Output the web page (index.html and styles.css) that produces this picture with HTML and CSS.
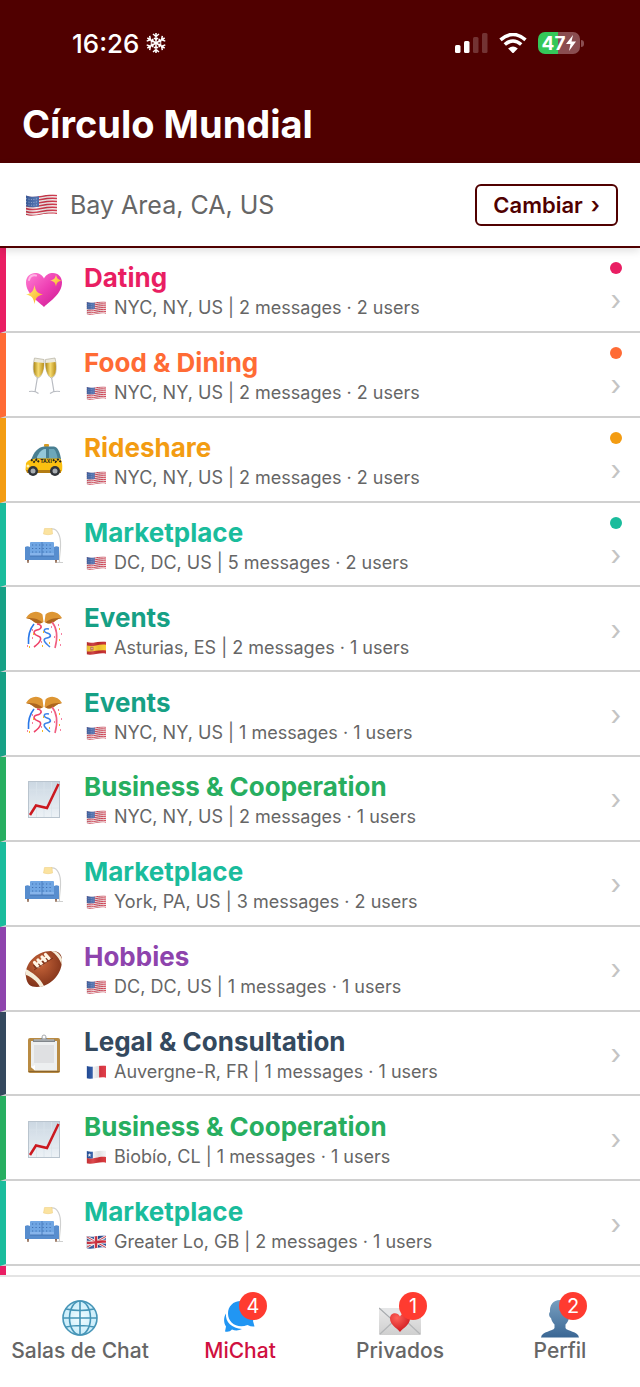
FILE: index.html
```html
<!DOCTYPE html>
<html lang="es">
<head>
  <meta charset="UTF-8">
  <meta name="viewport" content="width=device-width, initial-scale=1">
  <title>Círculo Mundial</title>
  <link rel="stylesheet" href="styles.css">
</head>
<body>
  <!-- icon sprite -->
  <svg class="sprite" aria-hidden="true">
    <defs>
      <linearGradient id="gHeart" x1="0" y1="0" x2="1" y2="1"><stop offset="0" stop-color="#ff7fd2"/><stop offset=".5" stop-color="#ee3fb4"/><stop offset="1" stop-color="#c9188f"/></linearGradient>
      <linearGradient id="gStar" x1="0" y1="0" x2="1" y2="1"><stop offset="0" stop-color="#fff27a"/><stop offset="1" stop-color="#f9a81e"/></linearGradient>
      <linearGradient id="gWine" x1="0" y1="0" x2="1" y2="0"><stop offset="0" stop-color="#a98414"/><stop offset=".45" stop-color="#f6dc72"/><stop offset="1" stop-color="#b88d17"/></linearGradient>
      <linearGradient id="gPaper" x1="0" y1="0" x2="0" y2="1"><stop offset="0" stop-color="#cbd7e2"/><stop offset="1" stop-color="#edf2f6"/></linearGradient>
      <linearGradient id="gPerson" x1="0" y1="0" x2="0" y2="1"><stop offset="0" stop-color="#789fc0"/><stop offset="1" stop-color="#3b6794"/></linearGradient>
      <radialGradient id="gBall" cx=".4" cy=".35" r=".7"><stop offset="0" stop-color="#c9663a"/><stop offset="1" stop-color="#7c2f17"/></radialGradient>
      <radialGradient id="gGlobe"><stop offset="0" stop-color="#f2fcff"/><stop offset="1" stop-color="#c8ecfa"/></radialGradient>
      <linearGradient id="gMail" x1="0" y1="0" x2="0" y2="1"><stop offset="0" stop-color="#e9e9e9"/><stop offset="1" stop-color="#cfcfcf"/></linearGradient>
      <radialGradient id="gRed" cx=".35" cy=".25" r=".8"><stop offset="0" stop-color="#ff6259"/><stop offset="1" stop-color="#cc151c"/></radialGradient>
      <linearGradient id="gShade" x1="0" y1="0" x2="1" y2="0"><stop offset="0" stop-color="#000" stop-opacity=".12"/><stop offset=".35" stop-color="#fff" stop-opacity=".12"/><stop offset=".65" stop-color="#000" stop-opacity=".08"/><stop offset="1" stop-color="#fff" stop-opacity=".05"/></linearGradient>
      <clipPath id="wave"><path d="M1 1.500C6 3.500 11 2.800 16 1.800S26 0 32 .8V20C26 19 21 19.800 16 20.500S6 22.500 1 21Z"/></clipPath>
    </defs>

    <symbol id="heart" viewBox="0 0 40 40">
      <path d="M20 37C14 31 2 24 2 12.500C2 6.500 6.500 3 11 3C15 3 18.500 5 20 8.500C21.500 5 25 3 29 3C34 3 38 7 38 12.500C38 24 26 31 20 37Z" fill="url(#gHeart)"/>
      <path d="M5 10C6 6 9 5 12 5.500" fill="none" stroke="#ffb5e5" stroke-width="2" stroke-linecap="round"/>
      <path d="M10.500 15C11.500 21 13 23 19 24.500C13 26 11.500 28 10.500 34C9.500 28 8 26 2 24.500C8 23 9.500 21 10.500 15Z" fill="url(#gStar)"/>
      <path d="M32 4.500C32.700 8.500 34 9.800 38 10.500C34 11.300 32.700 12.500 32 16.500C31.300 12.500 30 11.300 26 10.500C30 9.800 31.300 8.500 32 4.500Z" fill="url(#gStar)"/>
    </symbol>

    <symbol id="glasses" viewBox="0 0 40 40">
      <g stroke="#b9bcc2" stroke-width="1.200" fill="none">
        <path d="M13.500 22L11 37M5 36.500Q11 35.500 14.500 38.500"/>
        <path d="M27.500 22L30 37M36 36.500Q30 35.500 26 38.500"/>
      </g>
      <path d="M10.500 3L20 4.500C20.500 14 18 22 14 23C8.500 21.500 8.500 11 10.500 3Z" fill="#eceade" stroke="#b5b0a0" stroke-width=".7"/>
      <path d="M31 3L21.500 4.500C21 14 23.500 22 27.500 23C33 21.500 33 11 31 3Z" fill="#eceade" stroke="#b5b0a0" stroke-width=".7"/>
      <path d="M10 7L20 8C20 16 17.500 21.500 14 22.300C9.500 21 9 14 10 7Z" fill="url(#gWine)"/>
      <path d="M31.500 7L21.500 8C21.500 16 24 21.500 27.500 22.300C32 21 32.500 14 31.500 7Z" fill="url(#gWine)"/>
    </symbol>

    <symbol id="taxi" viewBox="0 0 40 40">
      <rect x="20" y="4" width="5" height="3" rx="1" fill="#d99c22"/>
      <path d="M7 20C10 12 14 7 20 6.500H30C34 7 36 13 37 19L36 22H8Z" fill="#487f92"/>
      <path d="M13 17C15 13 17 9.500 21 9H22V18H13Z" fill="#94c8d8"/>
      <path d="M25 9H30C32 11 33 15 33.500 18H25Z" fill="#6ca7b9"/>
      <path d="M2 23C4 20 8 19 12 18.500H36C38.500 21 38.500 27 38 31L35 33H4L1.500 30Z" fill="#fbc011"/>
      <path d="M7 19.500L10 22L12.500 19.500L15 22M29 19.500L31.500 22L34 19.500L37.500 22.500" fill="none" stroke="#26221b" stroke-width="1.800" stroke-dasharray="2 1"/>
      <circle cx="4" cy="26" r="1.500" fill="#fff3b4"/>
      <path d="M2 30H37V33H3Z" fill="#b47c13"/>
      <circle cx="9" cy="31" r="5" fill="#30343a"/><circle cx="9" cy="31" r="2.500" fill="#a8adb2"/>
      <circle cx="31" cy="31" r="5" fill="#30343a"/><circle cx="31" cy="31" r="2.500" fill="#a8adb2"/>
    </symbol>

    <symbol id="sofa" viewBox="0 0 40 40">
      <path d="M27 4C34 3 37 12 36.500 21C36.300 28 35 33 35.500 37M33 37.500H39" fill="none" stroke="#cfd0cf" stroke-width="1.200"/>
      <path d="M20.500 3.500H28L28.500 9Q24 10.500 19.500 9Z" fill="#fbe3a0" stroke="#eccb78" stroke-width=".5"/>
      <path d="M3 34H5L4.500 38H3.500ZM31 34H33L32.500 38H31.500Z" fill="#7b4c30"/>
      <path d="M6 18Q6 17 7 17H29Q30 17 30 18V28H6Z" fill="#70a6e3"/>
      <path d="M18 17V28" stroke="#4a7fc0"/>
      <path d="M8 20H29M8 23.500H29M8 27H29" stroke="#3e70b2" stroke-width="1.200" stroke-dasharray="1.200 2.300"/>
      <path d="M6 28H30V31H6Z" fill="#86b4eb"/><path d="M18 28V31" stroke="#4a7fc0"/>
      <path d="M1 22Q3.500 20.500 6 22V31H30V22Q32.500 20.500 35 22V35H1Z" fill="#578dce"/>
      <path d="M6 31H30" stroke="#3d70ae" stroke-width=".8"/>
    </symbol>

    <symbol id="party" viewBox="0 0 40 40">
      <path d="M2 8C6 1 14 0 18.500 4.500L19.500 12C15 15 11 13 9 11Q6 8.500 2 8Z" fill="#dd9634"/>
      <path d="M38 8C34 1 26 0 21.500 4.500L20.500 12C25 15 29 13 31 11Q34 8.500 38 8Z" fill="#dd9634"/>
      <path d="M2 8C7 8 14 8 18.500 12.500C14 15 10 12 9 11Q6 8.500 2 8ZM38 8C33 8 26 8 21.500 12.500C26 15 30 12 31 11Q34 8.500 38 8Z" fill="#ad661f"/>
      <g fill="none" stroke-width="1.600">
        <path d="M10 14C5 20 4 26 4.500 34" stroke="#2877e8"/>
        <path d="M28 12C33 18 34 27 31 38" stroke="#f05f80"/>
        <path d="M13 14C19 15 18 19 13 20S10 25 14 26S18 31 10 37" stroke="#ee4269"/>
        <path d="M25 19C19 18 19 22 23 23S28 27 23 28S20 32 26 37" stroke="#3c83e8"/>
      </g>
      <path d="M8 20h1M17 17h1M27 17h1M34 15h1M37 24h1M8 28h1M30 27h1M3 36h1M17 32h1M36 35h1" stroke="#f35883" stroke-width="1.500"/>
      <path d="M9 24h1M19 22h1M25 33h1M35 19h1M18 36h1M5 37h1M35 30h1" stroke="#f8ba25" stroke-width="1.800"/>
    </symbol>

    <symbol id="chart" viewBox="0 0 40 40">
      <rect x="4.500" y="2.500" width="31" height="36" fill="url(#gPaper)" stroke="#b9c4ce"/>
      <path d="M12.500 3V38M20 3V38M27.500 3V38M5 11H35M5 20H35M5 29H35" stroke="#d9e3eb" stroke-width=".8"/>
      <path d="M6 36L12 26.500L23 29L34.500 5" fill="none" stroke="#cb1920" stroke-width="2.500"/>
    </symbol>

    <symbol id="football" viewBox="0 0 40 40">
      <path d="M2 28C0 15 12 2 27 2C35 2 38.500 5 38 13C37 27 25 38 13 38C6 38 3 35 2 28Z" fill="url(#gBall)"/>
      <path d="M27 2C32 5 36 10 37.700 16L38 10C36.500 6 34 3 30.500 2.200ZM1.700 20C8 23 17 30 20 37L16 38C13 32 6 27 2 26Z" fill="#f5ecd8"/>
      <path d="M10 18L25 8" stroke="#7f351c" stroke-width="4"/>
      <path d="M10.500 13.500L14 17.500M14 11L17.500 15M18 8L21.500 12M21.500 5.500L25 9.500" stroke="#fff5e5" stroke-width="3.200" stroke-linecap="round"/>
      <path d="M11 16L24 6.500" stroke="#fff5e5" stroke-width="2"/>
      <path d="M10 21L29 9" stroke="#6d2813" stroke-width=".8"/>
    </symbol>

    <symbol id="clipboard" viewBox="0 0 40 40">
      <rect x="4" y="4" width="32" height="35" rx="2" fill="#b98b43"/>
      <path d="M4.500 37.500H35.500" stroke="#8a642c"/>
      <path d="M7 7H33V36.500H11L7 33Z" fill="#edeff0"/>
      <path d="M10 11H30V29H10Z" fill="#dfe0e2"/>
      <path d="M7 33L11 31V36.500Z" fill="#fff"/>
      <path d="M9 8V5.500H16L18 3.500H22L24 5.500H31V8Z" fill="#81868b"/>
      <circle cx="20" cy="3" r="2" fill="#fff" stroke="#a8abae"/>
      <path d="M10 6H30" stroke="#c5c9cc"/>
    </symbol>

    <symbol id="flag-us" viewBox="0 0 32 22">
      <g clip-path="url(#wave)">
        <path d="M0 0H32V22H0Z" fill="#f5eeee"/>
        <g fill="none" stroke="#cf3347" stroke-width="1.500">
          <path d="M0 2.300C6 4.300 11 3.600 16 2.600S26 .8 32 1.600"/>
          <path d="M0 5.300C6 7.300 11 6.600 16 5.600S26 3.800 32 4.600"/>
          <path d="M0 8.300C6 10.300 11 9.600 16 8.600S26 6.800 32 7.600"/>
          <path d="M0 11.300C6 13.300 11 12.600 16 11.600S26 9.800 32 10.600"/>
          <path d="M0 14.300C6 16.300 11 15.600 16 14.600S26 12.800 32 13.600"/>
          <path d="M0 17.300C6 19.300 11 18.600 16 17.600S26 15.800 32 16.600"/>
          <path d="M0 20.300C6 22.300 11 21.600 16 20.600S26 18.800 32 19.600"/>
        </g>
        <path d="M0 0H14V12.500C10 13.500 5 13.500 0 12Z" fill="#3d62a7"/>
        <path d="M1 4.500Q7 6.500 13 4.500M1 7.500Q7 9.500 13 7.500M1 10.500Q7 12 13 10.500" fill="none" stroke="#b9c9e6" stroke-width=".8" stroke-dasharray="1 1.500"/>
        <path d="M0 0H32V22H0Z" fill="url(#gShade)"/>
      </g>
    </symbol>

    <symbol id="flag-es" viewBox="0 0 32 22">
      <g clip-path="url(#wave)">
        <path d="M0 0H32V22H0Z" fill="#c72c2e"/>
        <path d="M0 6.500C6 8.500 11 7.800 16 6.800S26 5 32 5.800V15C26 14 21 14.800 16 15.500S6 17.500 0 16Z" fill="#fbcc30"/>
        <path d="M7 9H12V15H7Z" fill="#b3603a"/><path d="M8.500 10.500H10.500V13H8.500Z" fill="#e9c3ae"/>
        <path d="M0 0H32V22H0Z" fill="url(#gShade)"/>
      </g>
    </symbol>

    <symbol id="flag-fr" viewBox="0 0 32 22">
      <g clip-path="url(#wave)">
        <path d="M0 0H11V22H0Z" fill="#1f4da0"/><path d="M11 0H21V22H11Z" fill="#f3f3f4"/><path d="M21 0H32V22H21Z" fill="#df3440"/>
        <path d="M0 0H32V22H0Z" fill="url(#gShade)"/>
      </g>
    </symbol>

    <symbol id="flag-cl" viewBox="0 0 32 22">
      <g clip-path="url(#wave)">
        <path d="M0 0H32V22H0Z" fill="#f3f3f4"/>
        <path d="M0 12C6 14 11 13.300 16 12.300S26 10 32 11V22H0Z" fill="#d83237"/>
        <path d="M0 0H11V13Q5 14 0 12Z" fill="#2352a2"/>
        <path d="M5.500 4.500L6.300 7H8.700L6.800 8.500L7.500 11L5.500 9.500L3.500 11L4.200 8.500L2.300 7H4.700Z" fill="#fff"/>
        <path d="M0 0H32V22H0Z" fill="url(#gShade)"/>
      </g>
    </symbol>

    <symbol id="flag-gb" viewBox="0 0 32 22">
      <g clip-path="url(#wave)">
        <path d="M0 0H32V22H0Z" fill="#294c95"/>
        <path d="M0 2L32 20M0 20L32 2" stroke="#f2f2f4" stroke-width="4.500"/>
        <path d="M0 2L32 20M0 20L32 2" stroke="#d23445" stroke-width="1.600"/>
        <path d="M16 0V22M0 12Q8 13 16 11.300T32 10.500" fill="none" stroke="#f2f2f4" stroke-width="6.500"/>
        <path d="M16 0V22M0 12Q8 13 16 11.300T32 10.500" fill="none" stroke="#d2293a" stroke-width="3.800"/>
        <path d="M0 0H32V22H0Z" fill="url(#gShade)"/>
      </g>
    </symbol>

    <symbol id="globe" viewBox="0 0 40 40">
      <circle cx="20" cy="20" r="17" fill="url(#gGlobe)"/>
      <g fill="none" stroke="#4695b7" stroke-width="1.600">
        <circle cx="20" cy="20" r="17"/>
        <ellipse cx="20" cy="20" rx="10.500" ry="17"/>
        <path d="M20 3V37M3 20H37M6 11Q20 14 34 11M6 29Q20 26 34 29"/>
      </g>
    </symbol>

    <symbol id="bubbles" viewBox="0 0 40 40">
      <path d="M6 15.500C3.500 19 3.500 25 6 28.500L5 33.500Q9.500 34.500 12 31.500Q17 33.500 22 31C12 30.500 5 24 6 15.500Z" fill="#2196f3"/>
      <path d="M21 3C29 3 35 8.500 35 15.500C35 19 33.500 21 33 23L34.500 28.500Q31.500 29 27.500 27C17.500 31 8 25 8 15.500C8 8.500 13 3 21 3Z" fill="#2196f3"/>
    </symbol>

    <symbol id="letter" viewBox="0 0 42 40">
      <rect x="0" y="10" width="42" height="27" rx="1" fill="url(#gMail)"/>
      <path d="M1 36L15 23M41 36L27 23" stroke="#b4b6b8" stroke-width="1.200"/>
      <path d="M0 10L19 27Q21 28 23 27L42 10" fill="#e5e6e7" stroke="#a7abae" stroke-width="1.200"/>
      <path d="M21 34C18 30 11 27 11 20.500C11 14.500 18.500 13.500 21 18.500C23.500 13.500 31 14.500 31 20.500C31 27 24 30 21 34Z" fill="url(#gRed)"/>
    </symbol>

    <symbol id="person" viewBox="0 0 40 40">
      <path d="M20 2C27 2 30.500 7 30 14C31.500 15 31 19 29 20C28.500 23 27 25 25.500 26.500V30C27 33.500 38 33 39 39.500H1C2 33 13 33.500 14.500 30V26.500C13 25 11.500 23 11 20C9 19 8.500 15 10 14C9.500 7 13 2 20 2Z" fill="url(#gPerson)"/>
    </symbol>
  </svg>

  <div class="app">
    <header class="header">
      <div class="status-bar">
        <div class="status-time">
          <span>16:26</span>
          <svg class="snow" viewBox="0 0 22 22" aria-hidden="true">
            <g id="arm"><path d="M11 11V1M8 2L11 4.500L14 2M9 6L11 7.500L13 6"/></g>
            <use href="#arm" transform="rotate(60 11 11)"/>
            <use href="#arm" transform="rotate(120 11 11)"/>
            <use href="#arm" transform="rotate(180 11 11)"/>
            <use href="#arm" transform="rotate(240 11 11)"/>
            <use href="#arm" transform="rotate(300 11 11)"/>
          </svg>
        </div>
        <div class="status-icons">
          <svg class="signal" viewBox="0 0 33 20" aria-hidden="true">
            <rect x="0" y="12" width="5.500" height="8" rx="1.500" fill="#fff"/>
            <rect x="9" y="8" width="5.500" height="12" rx="1.500" fill="#fff"/>
            <rect x="18" y="4" width="5.500" height="16" rx="1.500" fill="#733333"/>
            <rect x="27" y="0" width="5.500" height="20" rx="1.500" fill="#733333"/>
          </svg>
          <svg class="wifi" viewBox="0 0 28 20" aria-hidden="true">
            <path d="M1.500 6.800Q14 -3.800 26.500 6.800M5.800 11.500Q14 4.500 22.200 11.500" fill="none" stroke="#fff" stroke-width="3.600"/>
            <path d="M9.200 15.500Q14 11.500 18.800 15.500L14 20.500Z" fill="#fff"/>
          </svg>
          <div class="battery">
            <div class="battery-body">
              <span>47</span>
              <svg class="bolt" viewBox="0 0 10 16" aria-hidden="true"><path d="M7 0L0 9H4.500L3 16L10 6.500H5.500Z" fill="#fff"/></svg>
            </div>
            <div class="battery-cap"></div>
          </div>
        </div>
      </div>
      <h1>Círculo Mundial</h1>
    </header>

    <section class="location-bar">
      <svg class="location-flag" aria-hidden="true"><use href="#flag-us"/></svg>
      <span class="location-name">Bay Area, CA, US</span>
      <button class="change-btn" type="button">Cambiar <span>›</span></button>
    </section>

    <main class="rooms">
      <a href="#" class="room dating">
        <svg class="room-icon" aria-hidden="true"><use href="#heart"/></svg>
        <div class="room-info">
          <h2>Dating</h2>
          <p><svg class="flag" aria-hidden="true"><use href="#flag-us"/></svg>NYC, NY, US | 2 messages · 2 users</p>
        </div>
        <div class="room-side"><i class="dot"></i><span class="chevron">›</span></div>
      </a>
      <a href="#" class="room food">
        <svg class="room-icon" aria-hidden="true"><use href="#glasses"/></svg>
        <div class="room-info">
          <h2>Food &amp; Dining</h2>
          <p><svg class="flag" aria-hidden="true"><use href="#flag-us"/></svg>NYC, NY, US | 2 messages · 2 users</p>
        </div>
        <div class="room-side"><i class="dot"></i><span class="chevron">›</span></div>
      </a>
      <a href="#" class="room rideshare">
        <svg class="room-icon" viewBox="0 0 40 40" aria-hidden="true">
          <use href="#taxi"/>
          <text x="22" y="23" class="taxi-sign">TAXI</text>
        </svg>
        <div class="room-info">
          <h2>Rideshare</h2>
          <p><svg class="flag" aria-hidden="true"><use href="#flag-us"/></svg>NYC, NY, US | 2 messages · 2 users</p>
        </div>
        <div class="room-side"><i class="dot"></i><span class="chevron">›</span></div>
      </a>
      <a href="#" class="room market">
        <svg class="room-icon" aria-hidden="true"><use href="#sofa"/></svg>
        <div class="room-info">
          <h2>Marketplace</h2>
          <p><svg class="flag" aria-hidden="true"><use href="#flag-us"/></svg>DC, DC, US | 5 messages · 2 users</p>
        </div>
        <div class="room-side"><i class="dot"></i><span class="chevron">›</span></div>
      </a>
      <a href="#" class="room events">
        <svg class="room-icon" aria-hidden="true"><use href="#party"/></svg>
        <div class="room-info">
          <h2>Events</h2>
          <p><svg class="flag" aria-hidden="true"><use href="#flag-es"/></svg>Asturias, ES | 2 messages · 1 users</p>
        </div>
        <div class="room-side"><span class="chevron">›</span></div>
      </a>
      <a href="#" class="room events">
        <svg class="room-icon" aria-hidden="true"><use href="#party"/></svg>
        <div class="room-info">
          <h2>Events</h2>
          <p><svg class="flag" aria-hidden="true"><use href="#flag-us"/></svg>NYC, NY, US | 1 messages · 1 users</p>
        </div>
        <div class="room-side"><span class="chevron">›</span></div>
      </a>
      <a href="#" class="room business">
        <svg class="room-icon" aria-hidden="true"><use href="#chart"/></svg>
        <div class="room-info">
          <h2>Business &amp; Cooperation</h2>
          <p><svg class="flag" aria-hidden="true"><use href="#flag-us"/></svg>NYC, NY, US | 2 messages · 1 users</p>
        </div>
        <div class="room-side"><span class="chevron">›</span></div>
      </a>
      <a href="#" class="room market">
        <svg class="room-icon" aria-hidden="true"><use href="#sofa"/></svg>
        <div class="room-info">
          <h2>Marketplace</h2>
          <p><svg class="flag" aria-hidden="true"><use href="#flag-us"/></svg>York, PA, US | 3 messages · 2 users</p>
        </div>
        <div class="room-side"><span class="chevron">›</span></div>
      </a>
      <a href="#" class="room hobbies">
        <svg class="room-icon" aria-hidden="true"><use href="#football"/></svg>
        <div class="room-info">
          <h2>Hobbies</h2>
          <p><svg class="flag" aria-hidden="true"><use href="#flag-us"/></svg>DC, DC, US | 1 messages · 1 users</p>
        </div>
        <div class="room-side"><span class="chevron">›</span></div>
      </a>
      <a href="#" class="room legal">
        <svg class="room-icon" aria-hidden="true"><use href="#clipboard"/></svg>
        <div class="room-info">
          <h2>Legal &amp; Consultation</h2>
          <p><svg class="flag" aria-hidden="true"><use href="#flag-fr"/></svg>Auvergne-R, FR | 1 messages · 1 users</p>
        </div>
        <div class="room-side"><span class="chevron">›</span></div>
      </a>
      <a href="#" class="room business">
        <svg class="room-icon" aria-hidden="true"><use href="#chart"/></svg>
        <div class="room-info">
          <h2>Business &amp; Cooperation</h2>
          <p><svg class="flag" aria-hidden="true"><use href="#flag-cl"/></svg>Biobío, CL | 1 messages · 1 users</p>
        </div>
        <div class="room-side"><span class="chevron">›</span></div>
      </a>
      <a href="#" class="room market">
        <svg class="room-icon" aria-hidden="true"><use href="#sofa"/></svg>
        <div class="room-info">
          <h2>Marketplace</h2>
          <p><svg class="flag" aria-hidden="true"><use href="#flag-gb"/></svg>Greater Lo, GB | 2 messages · 1 users</p>
        </div>
        <div class="room-side"><span class="chevron">›</span></div>
      </a>
      <div class="room-peek"></div>
    </main>

    <nav class="tabs">
      <a href="#" class="tab">
        <span class="tab-icon"><svg aria-hidden="true"><use href="#globe"/></svg></span>
        Salas de Chat
      </a>
      <a href="#" class="tab active">
        <span class="tab-icon"><svg aria-hidden="true"><use href="#bubbles"/></svg><b class="badge">4</b></span>
        MiChat
      </a>
      <a href="#" class="tab">
        <span class="tab-icon"><svg aria-hidden="true"><use href="#letter"/></svg><b class="badge">1</b></span>
        Privados
      </a>
      <a href="#" class="tab">
        <span class="tab-icon"><svg aria-hidden="true"><use href="#person"/></svg><b class="badge">2</b></span>
        Perfil
      </a>
    </nav>
  </div>
</body>
</html>
```

FILE: styles.css
```css
* { box-sizing: border-box; }
body { margin: 0; font-family: Inter, "Liberation Sans", sans-serif; background: #fff; color: #666; }
h1, h2, p { margin: 0; }
a { color: inherit; text-decoration: none; }
svg { display: block; flex: none; }
.sprite { position: absolute; width: 0; height: 0; }

.app { display: flex; flex-direction: column; height: 100vh; }

/* header */
.header { background: #500000; color: #fff; padding: 27px 22px 15px; }
.status-bar { display: flex; justify-content: space-between; align-items: center; height: 32px; padding: 0 34px 0 50px; }
.status-time { display: flex; align-items: center; gap: 6px; font-size: 26px; font-weight: 500; }
.snow { width: 22px; height: 22px; fill: none; stroke: #fff; stroke-width: 2; }
.status-icons { display: flex; align-items: center; gap: 11px; }
.signal { width: 33px; height: 20px; }
.wifi { width: 28px; height: 20px; }
.battery { display: flex; align-items: center; gap: 1px; }
.battery-body { display: flex; align-items: center; justify-content: center; gap: 1px; width: 42px; height: 22px; border-radius: 7px; background: linear-gradient(to right, #34c759 48%, #8a4d50 48%); font-size: 19px; font-weight: 700; }
.bolt { width: 10px; height: 16px; }
.battery-cap { width: 3px; height: 7px; border-radius: 0 3px 3px 0; background: #8a4d50; }
.snow { stroke-width: 1.5; }
h1 { margin-top: 41px; font-size: 38px; line-height: 48px; font-weight: 700; }

/* location */
.location-bar { position: relative; display: flex; align-items: center; height: 85px; padding: 0 22px 0 25px; border-bottom: 2px solid #500000; box-shadow: 0 3px 8px rgba(0, 0, 0, 0.12); }
.location-flag { width: 32px; height: 22px; margin-right: 13px; }
.location-name { flex: 1; font-size: 25px; }
.change-btn { display: flex; align-items: center; gap: 8px; height: 42px; padding: 0 16px; border: 2px solid #500000; border-radius: 6px; background: #fff; color: #500000; font-family: inherit; font-size: 22px; font-weight: 600; }

/* room list */
.rooms { flex: 1; min-height: 0; overflow: hidden; display: grid; grid-template-rows: repeat(12, minmax(80px, 1fr)) 9px; }
.room { display: flex; align-items: center; gap: 20px; padding: 2px 16px 0 18px; border-left: 6px solid; border-bottom: 2px solid #d0d0d0; }
.room-icon { width: 40px; height: 40px; }
.room-info { flex: 1; padding-top: 2px; }
.room-info h2 { font-size: 26px; line-height: 34px; font-weight: 700; }
.room-info p { display: flex; align-items: center; gap: 8px; padding-left: 2px; font-size: 18px; line-height: 26px; color: #666; }
.flag { width: 20px; height: 14px; }
.room-side { display: flex; flex-direction: column; align-items: center; gap: 8px; width: 16px; }
.dot { width: 12px; height: 12px; border-radius: 50%; background: currentColor; }
.chevron { font-size: 28px; line-height: 36px; color: #c4c4c4; }
.taxi-sign { font-size: 5px; font-weight: 700; text-anchor: middle; fill: #26221b; }

.dating { color: #e91e63; border-left-color: #e91e63; }
.food { color: #ff6b35; border-left-color: #ff6b35; }
.rideshare { color: #f39c12; border-left-color: #f39c12; }
.market { color: #1abc9c; border-left-color: #1abc9c; }
.events { color: #16a085; border-left-color: #16a085; }
.business { color: #27ae60; border-left-color: #27ae60; }
.hobbies { color: #8e44ad; border-left-color: #8e44ad; }
.legal { color: #34495e; border-left-color: #34495e; }
.room-peek { border-left: 6px solid #e91e63; }

/* bottom tabs */
.tabs { display: grid; grid-template-columns: repeat(4, 1fr); height: 112px; padding-top: 21px; border-top: 2px solid #e4e4e4; }
.tab { display: flex; flex-direction: column; align-items: center; font-size: 21px; line-height: 26px; font-weight: 500; }
.tab.active { color: #d0103f; }
.tab-icon { position: relative; }
.tab-icon svg { width: 42px; height: 40px; }
.badge { position: absolute; top: -6px; left: 20px; width: 28px; height: 28px; border-radius: 50%; background: #ff3b30; color: #fff; font-size: 20px; font-weight: 400; line-height: 28px; text-align: center; }
```
